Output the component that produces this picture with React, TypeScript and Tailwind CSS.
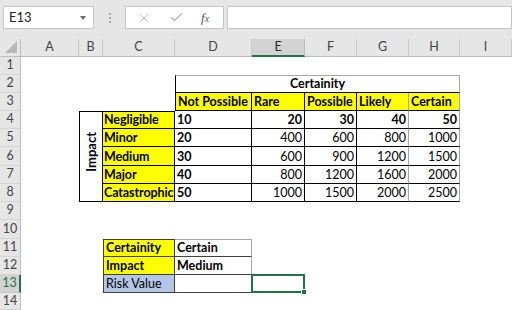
import { Check, X } from "lucide-react";

const font = "font-['Lato','Liberation_Sans',sans-serif]";

const colHeads = [
  { label: "A", pos: "col-start-2" },
  { label: "B", pos: "col-start-3" },
  { label: "C", pos: "col-start-4" },
  { label: "D", pos: "col-start-5" },
  { label: "E", pos: "col-start-6", active: true },
  { label: "F", pos: "col-start-7" },
  { label: "G", pos: "col-start-8" },
  { label: "H", pos: "col-start-9" },
  { label: "I", pos: "col-start-10" },
];

const rowStarts = [
  "row-start-2",
  "row-start-3",
  "row-start-4",
  "row-start-5",
  "row-start-6",
  "row-start-7",
  "row-start-8",
  "row-start-9",
  "row-start-10",
  "row-start-11",
  "row-start-12",
  "row-start-13",
  "row-start-14",
  "row-start-15",
];

const matrix = [
  ["Negligible", "10", "20", "30", "40", "50"],
  ["Minor", "20", "400", "600", "800", "1000"],
  ["Medium", "30", "600", "900", "1200", "1500"],
  ["Major", "40", "800", "1200", "1600", "2000"],
  ["Catastrophic", "50", "1000", "1500", "2000", "2500"],
];

const valueCols = ["col-start-6", "col-start-7", "col-start-8", "col-start-9"];
const valueBorder = [
  "border-r-black",
  "border-r-black",
  "border-r-[#a6a6a6]",
  "border-r-[#a6a6a6]",
];

function Cell({ className, children }: { className: string; children?: React.ReactNode }) {
  return (
    <div
      className={`flex items-end overflow-hidden whitespace-nowrap pb-[1px] text-[12.5px] leading-[15px] text-black ${className}`}
    >
      {children}
    </div>
  );
}

export default function App() {
  return (
    <div className={`h-[310px] w-[512px] overflow-hidden bg-white ${font}`}>
      {/* formula bar */}
      <div className="flex h-[39px] items-start gap-[3px] bg-[#e6e6e6] pt-[6px] pl-[3px]">
        <div className="flex h-[23px] w-[91px] items-center justify-between border border-[#c6c6c6] bg-white pr-[7px] pl-[5px] text-[13px] text-[#222]">
          <span>E13</span>
          <span className="h-0 w-0 border-x-[3.5px] border-t-[4px] border-x-transparent border-t-[#6b6b6b]" />
        </div>
        <div className="flex h-[23px] w-[25px] flex-col items-center justify-center gap-[2px]">
          <span className="h-[2px] w-[2px] bg-[#a8a8a8]" />
          <span className="h-[2px] w-[2px] bg-[#a8a8a8]" />
          <span className="h-[2px] w-[2px] bg-[#a8a8a8]" />
        </div>
        <div className="flex h-[23px] w-[99px] items-center border border-[#c6c6c6] bg-white pl-[11px]">
          <X className="h-[14px] w-[14px] text-[#b4b4b4]" strokeWidth={1.6} />
          <Check className="ml-[18px] h-[15px] w-[15px] text-[#b4b4b4]" strokeWidth={2.2} />
          <span className="ml-[17px] font-['Liberation_Serif',serif] text-[13px] text-[#555] italic">
            f<span className="text-[10px]">x</span>
          </span>
        </div>
        <div className="h-[23px] flex-1 border border-[#c6c6c6] bg-white" />
      </div>

      {/* sheet */}
      <div className="grid grid-cols-[21px_58px_24px_72px_77px_53px_52px_52px_51px_52px] grid-rows-[18px_18px_18px_18px_18px_18px_19px_18px_18px_18px_19px_18px_18px_18px_17px]">
        {/* corner */}
        <div className="col-start-1 row-start-1 flex items-end justify-end border-r border-b border-[#bdbdbd] bg-[#e6e6e6] pr-[3px] pb-[3px]">
          <svg width="12" height="12" viewBox="0 0 12 12">
            <polygon points="12,0 12,12 0,12" fill="#b7b7b7" />
          </svg>
        </div>

        {colHeads.map((c) => (
          <div
            key={c.label}
            className={`row-start-1 flex items-center justify-center border-r text-[12.5px] ${c.pos} ${
              c.active
                ? "border-b-2 border-r-[#bdbdbd] border-b-[#217346] bg-[#d3d3d3] text-[#262626]"
                : "border-b border-[#c8c8c8] border-b-[#bdbdbd] bg-[#e6e6e6] text-[#444]"
            }`}
          >
            {c.label}
          </div>
        ))}

        {rowStarts.map((r, i) => (
          <div
            key={r}
            className={`col-start-1 flex items-center justify-center border-b text-[12.5px] ${r} ${
              i === 12
                ? "border-r-2 border-r-[#217346] border-b-[#c8c8c8] bg-[#d3d3d3] text-[#217346]"
                : "border-r border-r-[#bdbdbd] border-b-[#d4d4d4] bg-[#e6e6e6] text-[#444]"
            }`}
          >
            {i + 1}
          </div>
        ))}

        {/* Certainity header */}
        <Cell className="col-span-5 col-start-5 row-start-3 justify-center border-t border-r border-b border-l border-t-[#a6a6a6] border-r-[#a6a6a6] border-b-black border-l-black font-bold">
          Certainity
        </Cell>

        {["Not Possible", "Rare", "Possible", "Likely", "Certain"].map((h, i) => (
          <Cell
            key={h}
            className={`row-start-4 border-r border-b border-b-black bg-[#ffff00] pl-[2px] font-bold ${
              ["col-start-5 border-l border-l-black", ...valueCols][i]
            } ${["border-r-black", ...valueBorder][i]}`}
          >
            {h}
          </Cell>
        ))}

        {/* merged Impact */}
        <div className="col-start-3 row-span-5 row-start-5 flex items-center justify-center border border-black pb-[10px]">
          <span className="rotate-180 text-[13px] leading-none font-bold text-black [writing-mode:vertical-rl]">
            Impact
          </span>
        </div>

        {matrix.map((row, i) => {
          const r = rowStarts[i + 3];
          return [
            <Cell
              key={`c${i}`}
              className={`col-start-4 border-r border-b border-black bg-[#ffff00] pl-[1px] font-bold tracking-[-0.1px] ${r} ${
                i === 0 ? "border-t" : ""
              }`}
            >
              {row[0]}
            </Cell>,
            <Cell key={`d${i}`} className={`col-start-5 border-r border-b border-black pl-[2px] font-bold ${r}`}>
              {row[1]}
            </Cell>,
            ...row.slice(2).map((v, j) => (
              <Cell
                key={`v${i}${j}`}
                className={`justify-end border-r border-b border-b-black pr-[2px] ${valueCols[j]} ${valueBorder[j]} ${r} ${
                  i === 0 ? "font-bold" : ""
                }`}
              >
                {v}
              </Cell>
            )),
          ];
        })}

        {/* lookup block */}
        <Cell className="col-start-4 row-start-12 border-t border-r border-b border-l border-[#404040] bg-[#ffff00] pl-[2px] font-bold">
          Certainity
        </Cell>
        <Cell className="col-start-5 row-start-12 border-t border-r border-b border-t-[#a6a6a6] border-r-[#a6a6a6] border-b-[#404040] pl-[2px] font-bold">
          Certain
        </Cell>
        <Cell className="col-start-4 row-start-13 border-r border-b border-l border-[#404040] bg-[#ffff00] pl-[2px] font-bold">
          Impact
        </Cell>
        <Cell className="col-start-5 row-start-13 border-r border-b border-r-[#a6a6a6] border-b-[#404040] pl-[2px] font-bold">
          Medium
        </Cell>
        <Cell className="col-start-4 row-start-14 border-r border-b border-l border-[#404040] bg-[#b4c6e7] pl-[2px] text-[#222a35]">
          Risk Value
        </Cell>
        <Cell className="col-start-5 row-start-14 border-r border-b border-r-[#a6a6a6] border-b-[#404040]" />

        {/* selected E13 */}
        <div className="relative col-start-6 row-start-14 -mt-px -ml-px border-2 border-[#217346]">
          <span className="absolute -right-[4px] -bottom-[4px] h-[6px] w-[6px] border border-white bg-[#217346]" />
        </div>
      </div>
    </div>
  );
}
